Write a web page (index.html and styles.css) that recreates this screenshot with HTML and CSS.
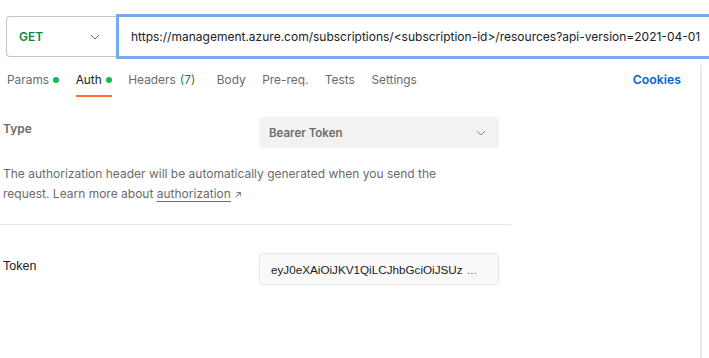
FILE: index.html
```html
<!DOCTYPE html>
<html lang="en">
<head>
  <meta charset="UTF-8">
  <title>Request - Auth</title>
  <link rel="stylesheet" href="styles.css">
</head>
<body>

  <div class="url-bar">
    <div class="method">
      <span class="method-name">GET</span>
      <svg class="chevron" width="10" height="6" viewBox="0 0 10 6"><path d="M1 1l4 4 4-4" fill="none" stroke="#6b6b6b" stroke-width="1"/></svg>
    </div>
    <div class="url-input">https://management.azure.com/subscriptions/&lt;subscription-id&gt;/resources?api-version=2021-04-01</div>
  </div>

  <div class="main">
    <div class="content">
      <div class="tabs">
        <span class="tab">Params <i class="dot"></i></span>
        <span class="tab active">Auth <i class="dot"></i></span>
        <span class="tab">Headers <span class="count">(7)</span></span>
        <span class="tab">Body</span>
        <span class="tab">Pre-req.</span>
        <span class="tab">Tests</span>
        <span class="tab">Settings</span>
        <span class="cookies">Cookies</span>
      </div>

      <div class="auth">
        <div class="auth-left">
          <div class="row">
            <div class="label strong">Type</div>
            <div class="select">
              <span>Bearer Token</span>
              <svg width="10" height="6" viewBox="0 0 10 6"><path d="M1 1l4 4 4-4" fill="none" stroke="#8a8a8a" stroke-width="1"/></svg>
            </div>
          </div>
          <p class="help">The authorization header will be automatically generated when you send the request. Learn more about <a href="#">authorization</a> <span class="arrow">&#8599;</span></p>
          <div class="divider"></div>
          <div class="row token-row">
            <div class="label plain">Token</div>
            <div class="token-input">
              <span class="token-value">eyJ0eXAiOiJKV1QiLCJhbGciOiJSUzI1NiIsIng1dCI6</span>
              <span class="token-more">...</span>
            </div>
          </div>
        </div>
      </div>
    </div>
    <div class="side"></div>
  </div>

</body>
</html>
```

FILE: styles.css
```css
body {
  margin: 0;
  font-family: Inter, "Noto Sans", sans-serif;
  font-size: 12px;
  color: #212121;
  background: #fff;
  overflow: hidden;
}
.url-bar {
  display: flex;
  padding: 14px 0 0 6px;
  height: 45px;
  width: 760px;
}
.method {
  width: 110px;
  height: 41px;
  margin-top: 2px;
  box-sizing: border-box;
  border: 1px solid #c4c4c4;
  border-right: none;
  border-radius: 4px 0 0 4px;
  display: flex;
  align-items: center;
  justify-content: space-between;
  padding: 0 16px 0 12px;
}
.method-name {
  color: #0b8a3e;
  font-weight: 600;
}
.url-input {
  flex: 1;
  box-sizing: border-box;
  height: 45px;
  border: 3px solid #75aaf0;
  padding: 0 0 0 12px;
  display: flex;
  align-items: center;
  white-space: nowrap;
  font-size: 12px;
}
.main {
  display: flex;
}
.content {
  width: 700px;
}
.side {
  width: 2px;
  height: 300px;
  background: #e8e8e8;
  margin-top: 6px;
}
.tabs {
  display: flex;
  align-items: center;
  height: 35px;
  margin-top: 3px;
  padding: 0 19px 0 7px;
  color: #6b6b6b;
  font-size: 11.9px;
}
.tab {
  position: relative;
  margin-right: 16.5px;
  height: 35px;
  display: flex;
  align-items: center;
}
.tab.active {
  color: #212121;
}
.tab.active::after {
  content: "";
  position: absolute;
  left: 0;
  right: 0;
  bottom: 0;
  height: 2px;
  background: #ff6c37;
}
.dot {
  display: inline-block;
  width: 6px;
  height: 6px;
  border-radius: 50%;
  background: #0cbb52;
  margin-left: 4px;
}
.count {
  color: #0b8a3e;
  margin-left: 4px;
  margin-right: 5px;
}
.cookies {
  margin-left: auto;
  color: #0265d2;
  font-weight: 600;
  font-size: 12.3px;
}
.auth {
  padding-top: 20px;
}
.auth-left {
  width: 511px;
}
.row {
  display: flex;
  align-items: flex-start;
}
.label {
  width: 256px;
  padding: 4px 0 0 3px;
  line-height: 15px;
  color: #212121;
}
.label.strong {
  font-weight: 600;
  color: #6b6b6b;
}
.label.plain {
  font-family: "Liberation Sans", Arial, sans-serif;
  font-size: 12.5px;
  padding-top: 6px;
}
.select {
  width: 240px;
  height: 31px;
  box-sizing: border-box;
  background: #f2f2f2;
  border-radius: 4px;
  display: flex;
  align-items: center;
  justify-content: space-between;
  padding: 0 13px 0 10px;
  font-size: 11.5px;
  font-weight: 600;
  color: #6b6b6b;
}
.help {
  margin: 16px 0 0 3px;
  width: 450px;
  line-height: 20px;
  color: #6b6b6b;
}
.help a {
  color: #6b6b6b;
  text-decoration: underline;
  text-underline-offset: 3px;
}
.arrow {
  font-size: 10px;
}
.divider {
  height: 1px;
  background: #e8e8e8;
  margin-top: 20px;
}
.token-row {
  margin-top: 28px;
}
.token-input {
  width: 240px;
  height: 32px;
  box-sizing: border-box;
  background: #f9f9f9;
  border: 1px solid #e6e6e6;
  border-radius: 4px;
  padding: 0 11px 0 11px;
  display: flex;
  align-items: center;
  white-space: nowrap;
  font-family: "Liberation Sans", Arial, sans-serif;
  font-size: 11.7px;
}
.token-value {
  width: 192px;
  overflow: hidden;
}
.token-more {
  margin-left: 4px;
  color: #6b6b6b;
}
```
